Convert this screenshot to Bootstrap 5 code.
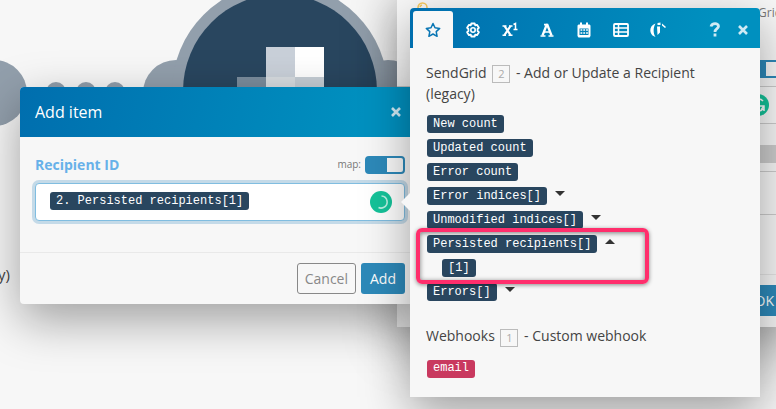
<!DOCTYPE html>
<html lang="en">
<head>
<meta charset="utf-8">
<meta name="viewport" content="width=device-width, initial-scale=1">
<title>Add item</title>
<link href="https://cdn.jsdelivr.net/npm/bootstrap@5.3.0/dist/css/bootstrap.min.css" rel="stylesheet">
<style>
body{font-family:"Open Sans","Noto Sans",sans-serif;font-size:14px;line-height:21px;color:#444;background:#f7f7f7}
.stage{min-height:100vh}
.scene{left:0;top:0}
.win{background:#f7f7f7;box-shadow:0 16px 48px rgba(0,0,0,.36)}
.win-back{left:397px;right:-20px;top:-20px;padding-top:20px}
.win-add{left:20px;right:356px;top:87px;border-radius:4px}
.win-map{right:16px;width:350px;top:8px;border-radius:4px 4px 0 0;padding-bottom:19px}
.bar{background:linear-gradient(105deg,#006eae,#0090bf 85%);color:#fff}
.win-add .bar{height:50px;padding:0 18px 0 15px;font-size:16px;border-radius:4px 4px 0 0}
.win-map .bar{height:40px;padding:3px 3px 0;border-radius:4px 4px 0 0}
.ico{border:0;background:none;padding:0;color:#fff;display:flex;align-items:center;justify-content:center}
.tool{width:37px;height:37px}
.tool.on{width:40px;margin-right:1px;background:#f7f7f7;color:#0a76b4;border-radius:3px 3px 0 0}
.tool.help{width:28px}
.pale{color:#cfeaf4}
.form-area{padding:17px 15px 0}
.fld-label{color:#67b1e9;font-weight:700}
.map-label{font-size:10px;color:#777}
.sw{appearance:none;width:40px;height:18px;border:2px solid #2d89b9;border-radius:4px;background:linear-gradient(90deg,#2d89b9 20px,#f9f9f9 20px);margin:0}
.fld{height:38px;background:#fff;border:1px solid #80bde0;border-radius:4px;box-shadow:0 0 0 3px #c4dae8;padding:0 12px 0 14px}
.fld .pill{margin-bottom:2px}
.pill{display:inline-block;border:0;height:18px;line-height:17px;padding:0 6px;border-radius:3px;background:#29465f;color:#fff;font-family:"Liberation Mono",monospace;font-size:12px;text-align:left}
.pill.red{background:#c9395f}
.foot{border-top:1px solid #e9e9e9;padding:10px 15px;margin-top:31px}
.act{height:31px;padding:0 8px;border-radius:3px;font-size:14px;line-height:29px}
.act-main{background:#2d89b9;color:#fff}
.act-line{border:1px solid #888;color:#888;padding:0 7px;margin-right:5px}
.mods{padding:14px 16px 0 16px}
.mods h2{font-size:14px;line-height:21px;margin:0;font-weight:400;color:#444}
.num{display:inline-block;width:18px;height:18px;border:1px solid #bbb;color:#aaa;font-size:11px;line-height:16px;text-align:center;margin:0 2px;vertical-align:middle}
.tree{margin:11px 0 0 1px;display:grid;gap:6px}
.tree li{height:18px}
.tog{border:0;background:none;padding:0 0 6px 8px;line-height:1;display:flex;color:#333}
.child{padding-left:15px}
.mods .hook{margin-top:24px}
.hook + .tree{margin-top:13px}
.hl{left:6px;right:111px;top:220px;height:56px;border:4px solid #ff2e6c;border-radius:6px;box-shadow:0 1px 4px rgba(0,0,0,.45),inset 0 1px 5px rgba(0,0,0,.5);pointer-events:none}
.beak{left:-9px;top:185px}
.bk-title{margin:3px 0 0;padding-left:361px;font-size:12px;color:#777;line-height:20px}
.bk-sw{margin:37px 12px 0 auto}
.bk-fld{height:38px;margin-top:8px;border:solid #ccc;border-width:1px 0;background:#fafafa;padding-left:350px}
.bk-row{height:18px;background:#ccc;margin-top:21px}
.bk-box{height:44px;margin-top:8px;border:solid #ccc;border-width:1px 0}
.bk-foot{margin-top:59px;border-top:1px solid #e5e5e5;padding:10px 13px 11px}
.bulb{left:20px;top:22px}
</style>
<script src="https://cdn.jsdelivr.net/npm/bootstrap@5.3.0/dist/js/bootstrap.bundle.min.js"></script>
</head>
<body>
<main class="stage position-relative overflow-hidden">
  <svg class="scene position-absolute" width="400" height="300" aria-hidden="true">
    <g fill="#929fac">
      <circle cx="-6" cy="93" r="33"/><circle cx="56" cy="92" r="10"/><circle cx="86" cy="92" r="10"/><circle cx="115" cy="92" r="10"/>
      <circle cx="176" cy="93" r="33"/><circle cx="388" cy="93" r="33"/><circle cx="280" cy="91" r="108"/>
    </g>
    <circle cx="280" cy="91" r="97" fill="#29465f"/>
    <path fill="#c9d0d9" d="M266 47h29v30h-29z"/><path fill="#fff" d="M295 47h29v30h-29z"/>
    <path fill="#7b8d9d" d="M237 77h29v30h-29z"/><path fill="#d8dde1" d="M266 77h29v30h-29z"/><path fill="#c6ced5" d="M295 77h29v30h-29z"/>
    <text x="10" y="280" text-anchor="end" font-size="15" fill="#444">y)</text>
  </svg>

  <section class="win win-back position-absolute d-flex flex-column" aria-label="SendGrid">
    <svg class="bulb position-absolute" width="12" height="14" fill="none" stroke="#f5c75b" stroke-width="1.5" aria-hidden="true"><circle cx="5.500" cy="5.500" r="4.500"/><path d="M3 5a3 3 0 0 1 2-2M4 10v3h3v-3"/></svg>
    <p class="bk-title">Grid</p>
    <input class="sw bk-sw" type="checkbox" checked aria-label="Map">
    <div class="bk-fld d-flex align-items-center">
      <svg width="22" height="22" aria-hidden="true"><circle cx="11" cy="11" r="11" fill="#15c39a"/><path d="M16 7a6 6 0 1 0 0 8M11 12h6v5M17 12l-3 4" fill="none" stroke="#fff" stroke-width="1.500"/></svg>
    </div>
    <div class="bk-row"></div>
    <div class="bk-box"></div>
    <div class="bk-foot d-flex justify-content-end"><button class="btn act act-main">OK</button></div>
  </section>

  <section class="win win-add position-absolute" aria-label="Add item">
    <header class="bar d-flex align-items-center justify-content-between">
      <span>Add item</span>
      <button class="ico pale" aria-label="Close"><svg width="12" height="12" stroke="currentColor" stroke-width="2.600"><path d="M2 2l8 8M10 2l-8 8"/></svg></button>
    </header>
    <div class="form-area">
      <div class="d-flex align-items-center justify-content-between">
        <label class="fld-label" for="rid">Recipient ID</label>
        <span class="d-flex align-items-center gap-1"><label class="map-label" for="map">map:</label><input class="sw" id="map" type="checkbox" checked></span>
      </div>
      <div class="fld d-flex align-items-center justify-content-between mt-2">
        <button class="pill" id="rid">2. Persisted recipients[1]</button>
        <svg width="22" height="22" aria-hidden="true"><circle cx="11" cy="11" r="11" fill="#15c39a"/><path d="M11.500 5a6 6 0 0 1 2 11.500a6 6 0 0 1-5 0" fill="none" stroke="#b8f1e3" stroke-width="1.600"/></svg>
      </div>
    </div>
    <footer class="foot d-flex justify-content-end">
      <button class="btn act act-line">Cancel</button><button class="btn act act-main">Add</button>
    </footer>
  </section>

  <section class="win win-map position-absolute" aria-label="Mapping">
    <svg class="beak position-absolute" width="9" height="18" fill="#f7f7f7" aria-hidden="true"><path d="M9 0v18L0 9z"/></svg>
    <nav class="bar d-flex" aria-label="Tools">
      <button class="ico tool on" aria-label="Favourites"><svg width="16" height="16" viewBox="0 0 16 16" fill="none" stroke="currentColor" stroke-width="1.500" stroke-linejoin="round"><path d="M8 1.500l2 4.300 4.700.6-3.500 3.200.9 4.700L8 12l-4.100 2.300.9-4.700L1.300 6.400 6 5.800z"/></svg></button>
      <button class="ico tool" aria-label="General"><svg width="16" height="16" viewBox="0 0 16 16" fill="none" stroke="currentColor"><path stroke-width="1.800" stroke-linejoin="round" d="M6.300 1.500h3.400l.5 1.800 1.800-.5 1.900 3-1.300 1.200v2l1.300 1.200-1.900 3-1.800-.5-.5 1.800H6.300l-.5-1.800-1.800.5-1.900-3L3.400 9V7L2.100 5.800l1.900-3 1.800.5z"/><circle cx="8" cy="8" r="2.200" stroke-width="1.600"/></svg></button>
      <button class="ico tool" aria-label="Math"><svg width="16" height="16" viewBox="0 0 16 16" fill="none" stroke="currentColor"><path stroke-width="2.200" d="M2.500 4l6 9M8.500 4l-6 9"/><path stroke-width="1.500" d="M.5 4h4M7 4h3.500M.5 13.200h3.500M6.500 13.200h4M11.500 2.500l2-1v6M11.500 7.500h4"/></svg></button>
      <button class="ico tool" aria-label="Text"><svg width="16" height="16" viewBox="0 0 16 16" fill="none" stroke="currentColor"><path stroke-width="2.300" d="M3.500 13.500L7.600 3h.8l4.100 10.500"/><path stroke-width="1.700" d="M4.500 10h7M1.500 14h5M9.500 14h5M5 2.700h3.500"/></svg></button>
      <button class="ico tool" aria-label="Date"><svg width="14" height="16" viewBox="0 0 14 16"><path fill="currentColor" fill-rule="evenodd" d="M3 .5h2v2h4v-2h2v2h1.500l1 1V14l-1 1.500h-11L.5 14V3.500l1-1H3zM2.500 6.500V13h9V6.500z"/><path stroke="currentColor" stroke-width="1.500" stroke-dasharray="1.800 1" d="M3.500 8h8M3.500 11h8"/></svg></button>
      <button class="ico tool" aria-label="Arrays"><svg width="16" height="14" viewBox="0 0 16 14" fill="none" stroke="currentColor"><rect x="1" y="1" width="14" height="12" rx="1" stroke-width="1.800"/><path stroke-width="1.500" d="M1 5h14M1 9h14M5.500 1v12"/></svg></button>
      <button class="ico tool" aria-label="Custom"><svg width="16" height="16" viewBox="0 0 16 16" fill="currentColor"><path d="M5.500 1.500C-.5 3.500-1 10 2.500 13.500L5.500 15C3 11 3 6 5.500 1.500zM7 4.500h3v6L7.500 13zM7.500 1l3-.5V3h-3zM12 1.500l4 3.500-1 1-3-2.500z"/></svg></button>
      <button class="ico tool help pale ms-auto" aria-label="Help"><svg width="12" height="15" viewBox="0 0 12 15" fill="none" stroke="currentColor" stroke-width="2.800"><path d="M2 4.500C3 .8 9.500.8 9.500 4.300 9.500 6.800 6 6.500 6 10M6 11.500v3"/></svg></button>
      <button class="ico pale px-2" aria-label="Close"><svg width="12" height="12" stroke="currentColor" stroke-width="2.600"><path d="M2 2l8 8M10 2l-8 8"/></svg></button>
    </nav>
    <div class="mods">
      <h2>SendGrid <span class="num">2</span> - Add or Update a Recipient (legacy)</h2>
      <ul class="tree list-unstyled">
        <li class="d-flex"><button class="pill">New count</button></li>
        <li class="d-flex"><button class="pill">Updated count</button></li>
        <li class="d-flex"><button class="pill">Error count</button></li>
        <li class="d-flex"><button class="pill">Error indices[]</button><button class="tog align-items-center" aria-label="Expand"><svg width="10" height="5" fill="currentColor"><path d="M0 0h10L5 5z"/></svg></button></li>
        <li class="d-flex"><button class="pill">Unmodified indices[]</button><button class="tog align-items-center" aria-label="Expand"><svg width="10" height="5" fill="currentColor"><path d="M0 0h10L5 5z"/></svg></button></li>
        <li class="d-flex"><button class="pill">Persisted recipients[]</button><button class="tog align-items-center" aria-label="Collapse"><svg width="10" height="5" fill="currentColor"><path d="M0 5h10L5 0z"/></svg></button></li>
        <li class="d-flex child"><button class="pill">[1]</button></li>
        <li class="d-flex"><button class="pill">Errors[]</button><button class="tog align-items-center" aria-label="Expand"><svg width="10" height="5" fill="currentColor"><path d="M0 0h10L5 5z"/></svg></button></li>
      </ul>
      <h2 class="hook">Webhooks <span class="num">1</span> - Custom webhook</h2>
      <ul class="tree list-unstyled"><li class="d-flex"><button class="pill red">email</button></li></ul>
    </div>
    <div class="hl position-absolute"></div>
  </section>
</main>
</body>
</html>
